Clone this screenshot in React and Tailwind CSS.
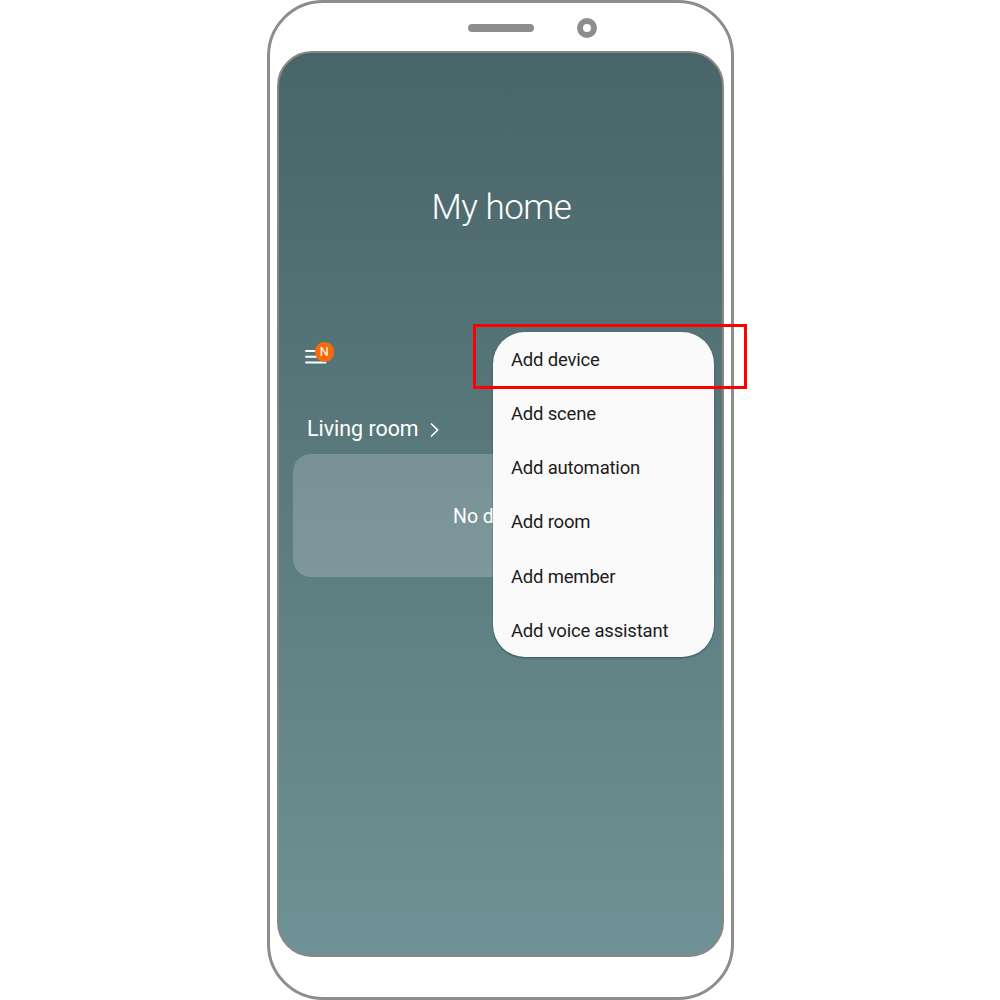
const actions = ["Add device", "Add scene", "Add automation", "Add room", "Add member", "Add voice assistant"];

function PhoneTop() {
  return (
    <div className="flex h-12 items-center justify-center gap-[43px] pb-px pl-[64px]">
      <div className="mt-[2px] h-[8px] w-[66px] rounded-full bg-[#8d8d8d]" />
      <div className="mt-[2px] size-5 rounded-full border-[6px] border-[#8d8d8d] bg-white" />
    </div>
  );
}

function MenuButton() {
  return (
    <div className="relative h-5 w-8">
      <svg className="block" width="24" height="24" viewBox="0 0 24 24" fill="none" stroke="white" strokeWidth="2">
        <path d="M0.3 9H21.3M0.3 14.7H21.3M0.3 20.5H21.3" />
      </svg>
      <span className="absolute right-[3px] top-0 flex size-[19.5px] items-center justify-center rounded-full bg-[#fa6a0a] pt-px text-[12.5px] leading-none text-white">
        N
      </span>
    </div>
  );
}

function AddMenu() {
  return (
    <ul className="absolute right-[8px] top-[279px] flex h-[325px] w-[221px] flex-col rounded-[32px] bg-[#fafafa] shadow-[0_1px_2px_rgba(20,50,55,0.6)]">
      {actions.map((label) => (
        <li key={label} className="flex flex-1 items-center pl-[18px] pt-[2px] text-[18.5px] leading-none tracking-[-0.2px] text-[#1c1c1c]">
          {label}
        </li>
      ))}
    </ul>
  );
}

export default function App() {
  return (
    <main className="flex h-[1000px] w-[1000px] justify-center overflow-hidden bg-white pl-px font-['Roboto',sans-serif]">
      <div className="relative flex h-[1000px] w-[467px] flex-col rounded-[56px] border-[3px] border-[#8d8d8d] px-[7px]">
        <PhoneTop />
        <section className="relative flex h-[906px] flex-col rounded-[35px] border-2 border-[#8b8686] bg-linear-to-b from-[#486569] to-[#6e9295] bg-origin-border px-[14px] text-white">
          <header className="flex h-[289px] items-center justify-center pl-[2px] pt-[20px]">
            <h1 className="text-[35px] font-light leading-none tracking-[-0.5px]">My home</h1>
          </header>
          <div className="flex flex-col gap-[52px] pb-[11px] pl-3">
            <MenuButton />
            <h2 className="flex h-[29px] items-center gap-[11px] pl-[2px] text-[21.4px] leading-none">
              Living room
              <svg className="mt-[2px]" width="10" height="16" viewBox="0 0 10 16" fill="none" stroke="white" strokeWidth="1.6">
                <path d="M1 1.5L7.7 8L1 14.5" />
              </svg>
            </h2>
          </div>
          <div className="flex h-[123px] w-[415px] items-center rounded-[18px] bg-[#dce1e6]/25 pl-[160px] pt-[3px] text-[19.5px]">
            No d
          </div>
          <AddMenu />
        </section>
        <div className="absolute -right-4 top-[321.4px] h-[65px] w-[274px] border-[3px] border-[#ff0000]" />
      </div>
    </main>
  );
}
